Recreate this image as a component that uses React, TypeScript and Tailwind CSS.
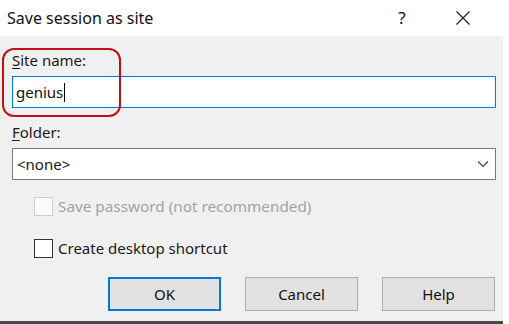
const font = { fontFamily: '"Noto Sans", "Open Sans", sans-serif' };

const Checkbox = ({ label, disabled }: { label: string; disabled?: boolean }) => (
  <div className="flex items-center h-[20px] pl-[22px]">
    <div
      className={
        disabled
          ? "w-[19px] h-[19px] border border-[#cfcfcf] bg-[#fbfbfb]"
          : "w-[19px] h-[19px] border border-[#333333] bg-white"
      }
    />
    <span className={disabled ? "ml-[5px] text-[15.3px] text-[#a3a3a3]" : "ml-[5px] text-[15px] text-[#1a1a1a]"}>
      {label}
    </span>
  </div>
);

const App = () => {
  return (
    <div className="w-[509px] h-[324px] bg-white flex flex-col relative overflow-hidden" style={font}>
      {/* title bar */}
      <div className="h-[36px] flex items-center pl-[7px] text-[16px] text-[#111111] mr-[6px]">
        <span className="flex-1">Save session as site</span>
        <span className="w-[20px] text-center text-[17px] mr-[43px]">?</span>
        <svg width="16" height="16" viewBox="0 0 16 16" className="mr-[32px]">
          <path d="M1.5 1.5 L14.5 14.5 M14.5 1.5 L1.5 14.5" stroke="#222" strokeWidth="1.2" fill="none" />
        </svg>
      </div>

      {/* body */}
      <div className="flex-1 bg-[#f0f0f0] mr-[6px] flex flex-col border-b-[3px] border-[#4a4a4a] pl-[12px] pr-[7px] text-[15px] text-[#1a1a1a]">
        <div className="mt-[14px] h-[20px] leading-[20px]">
          <span className="underline underline-offset-2">S</span>ite name:
        </div>
        <div className="mt-[6px] h-[32px] border border-[#0078d7] bg-white flex items-center pl-[3px] text-[#111111]">
          <span>genius</span>
          <span className="w-[1px] h-[19px] bg-black ml-[1px]" />
        </div>
        <div className="mt-[14px] h-[20px] leading-[20px]">
          <span className="underline underline-offset-2">F</span>older:
        </div>
        <div className="mt-[6px] h-[32px] border border-[#7a7a7a] bg-white flex items-center pl-[4px] pr-[6px]">
          <span className="flex-1">&lt;none&gt;</span>
          <svg width="12" height="8" viewBox="0 0 12 8">
            <path d="M1 1.5 L6 6.5 L11 1.5" stroke="#444" strokeWidth="1.2" fill="none" />
          </svg>
        </div>
        <div className="mt-[16px]">
          <Checkbox label="Save password (not recommended)" disabled />
        </div>
        <div className="mt-[22px]">
          <Checkbox label="Create desktop shortcut" />
        </div>
        <div className="mt-[19px] flex gap-[24px] pl-[96px]">
          <button className="w-[113px] h-[34px] bg-[#e1e1e1] border-2 border-[#0078d7] text-[15px] text-[#111111]">
            OK
          </button>
          <button className="w-[113px] h-[34px] bg-[#e1e1e1] border border-[#adadad] text-[15px] text-[#111111]">
            Cancel
          </button>
          <button className="w-[113px] h-[34px] bg-[#e1e1e1] border border-[#adadad] text-[15px] text-[#111111]">
            Help
          </button>
        </div>
      </div>

      {/* annotation highlight */}
      <div className="absolute left-[2px] top-[48px] w-[119px] h-[69px] border-2 border-[#c0101a] rounded-[12px] pointer-events-none" />
    </div>
  );
};

export default App;
